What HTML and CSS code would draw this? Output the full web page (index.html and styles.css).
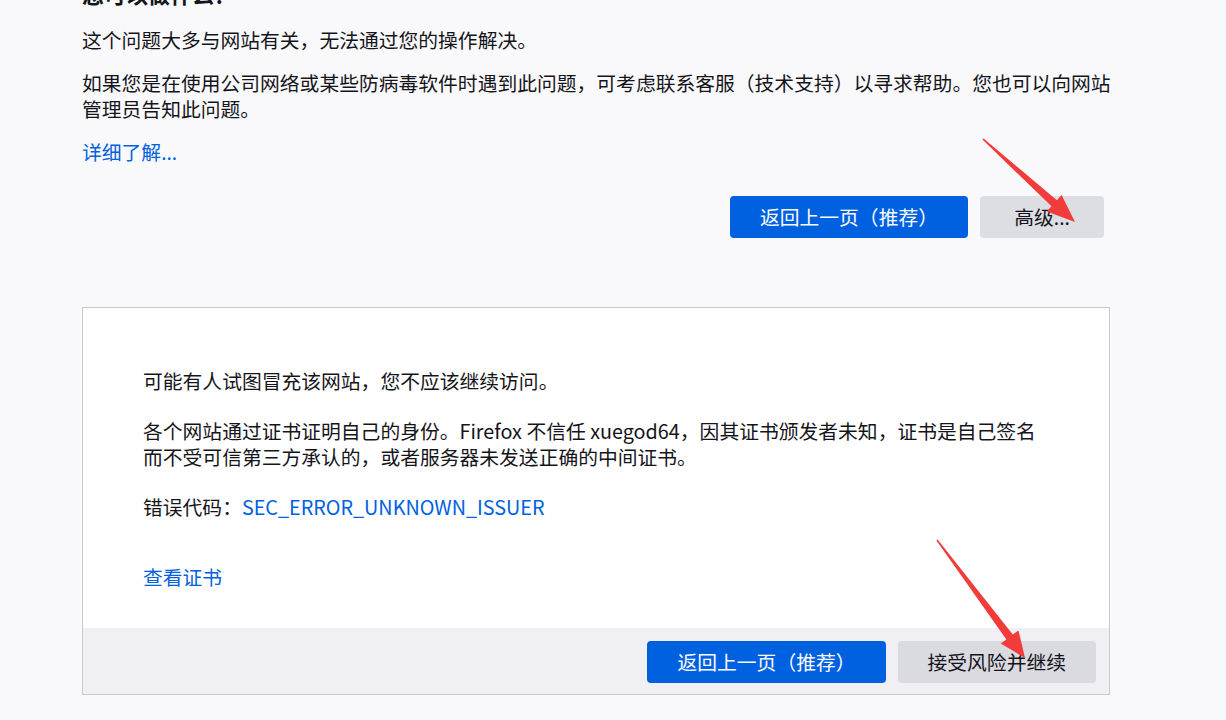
FILE: index.html
```html
<!DOCTYPE html>
<html lang="zh-CN">
<head>
<meta charset="utf-8">
<title>警告：面临潜在的安全风险</title>
<link rel="stylesheet" href="styles.css">
</head>
<body>
<main class="page">
  <div class="intro">
    <h1 class="title">您可以做什么？</h1>
    <p class="para first">这个问题大多与网站有关，无法通过您的操作解决。</p>
    <p class="para">如果您是在使用公司网络或某些防病毒软件时遇到此问题，可考虑联系客服（技术支持）以寻求帮助。您也可以向网站管理员告知此问题。</p>
    <p class="para"><a class="link" href="#">详细了解<span class="latin">...</span></a></p>
  </div>
  <div class="actions">
    <button class="btn primary">返回上一页（推荐）</button>
    <button class="btn secondary">高级<span class="latin">...</span></button>
  </div>
  <section class="advanced">
    <div class="adv-body">
      <p class="adv-para first">可能有人试图冒充该网站，您不应该继续访问。</p>
      <p class="adv-para">各个网站通过证书证明自己的身份。Firefox 不信任 xuegod64，因其证书颁发者未知，证书是自己签名而不受可信第三方承认的，或者服务器未发送正确的中间证书。</p>
      <p class="adv-para">错误代码：<a class="link" href="#">SEC_ERROR_UNKNOWN_ISSUER</a></p>
      <p class="adv-para cert"><a class="link" href="#">查看证书</a></p>
    </div>
    <div class="adv-footer">
      <button class="btn primary">返回上一页（推荐）</button>
      <button class="btn secondary">接受风险并继续</button>
    </div>
  </section>
</main>
<svg class="annotations" width="1226" height="720" viewBox="0 0 1226 720" aria-hidden="true">
  <polygon fill="#f23b3b" points="983.6,138.4 1056.9,200.2 1061.6,195 1075,222 1046.8,211.4 1051.5,206.2 982.4,139.6"/>
  <polygon fill="#f23b3b" points="937.6,539.5 1012.8,634.6 1018.5,630.5 1025,658 1000.7,643.5 1006.4,639.4 936.4,540.5"/>
</svg>
</body>
</html>
```

FILE: styles.css
```css
html, body {
  margin: 0;
  padding: 0;
}

body {
  background: #f9f9fb;
  color: #15141a;
  font-family: "Noto Sans CJK SC", "Noto Sans", sans-serif;
  font-size: 19.8px;
  line-height: 26px;
  overflow: hidden;
  height: 720px;
  position: relative;
}

.page {
  padding-left: 82px;
  width: 1032px;
}

.intro {
  width: 1032px;
}

.title {
  margin: -22px 0 0;
  font-size: 22px;
  line-height: 30px;
  font-weight: 700;
}

.para {
  margin: 17px 0 0;
}

.para.first {
  margin-top: 19px;
}

.latin {
  font-family: "Noto Sans", sans-serif;
}

.link {
  color: #0061e0;
  text-decoration: none;
}

.actions {
  display: flex;
  justify-content: flex-end;
  gap: 12px;
  margin-top: 30px;
  padding-right: 10px;
}

.btn {
  font-family: inherit;
  font-size: 19.8px;
  line-height: 26px;
  height: 42px;
  padding: 0 30px;
  border: none;
  border-radius: 4px;
  cursor: pointer;
}

.btn.primary {
  background: #0061e0;
  color: #fbfbfe;
  min-width: 238px;
}

.btn.secondary {
  background: rgba(207, 207, 216, 0.66);
  color: #15141a;
}

.actions .btn.secondary {
  min-width: 124px;
}

.adv-footer .btn.secondary {
  min-width: 198px;
}

.advanced {
  margin-top: 69px;
  width: 1028px;
  box-sizing: border-box;
  border: 1px solid #c9c9cd;
  background: #ffffff;
}

.adv-body {
  padding: 60px 60px 38px;
}

.adv-para {
  margin: 24px 0 0;
}

.adv-para.first {
  margin-top: 0;
}

.adv-para.cert {
  margin-top: 44px;
}

.adv-footer {
  background: #f0f0f4;
  display: flex;
  justify-content: flex-end;
  gap: 12px;
  padding: 13px 13px 11px;
}

.annotations {
  position: absolute;
  left: 0;
  top: 0;
  pointer-events: none;
}
```
